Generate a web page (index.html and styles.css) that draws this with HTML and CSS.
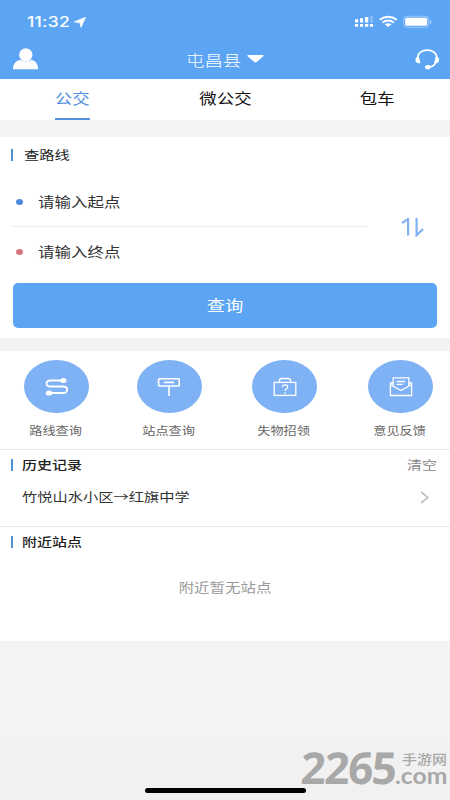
FILE: index.html
```html
<!DOCTYPE html>
<html lang="zh-CN">
<head>
<meta charset="utf-8">
<title>公交查询</title>
<link rel="stylesheet" href="styles.css">
</head>
<body>
<div class="app">
  <header class="header">
    <div class="status">
      <div class="status-left"><span class="wide time">11:32</span>
        <svg class="loc" width="12" height="11" viewBox="0 0 12 11"><path d="M11.5 .3 .4 4.9 5.8 5.6 7 10.3Z" fill="#fff" stroke="#fff" stroke-width=".8" stroke-linejoin="round"/></svg>
      </div>
      <svg class="signals" width="78" height="14" viewBox="0 0 78 14" fill="#fff">
        <path d="M0 4.3h3.2v3.2H0zM5 3.2h3.2v4.3H5zM10 2h3.3v5.5H10zM0 9h3.2v2.8H0zM5 9h3.2v2.8H5zM10 9h3.3v2.8H10zM15 9h3.2v2.8H15z"/>
        <path d="M15 1h3.2v6.5H15z" opacity=".25"/>
        <g fill="none" stroke="#fff" stroke-width="1.9"><path d="M24.7 4.7Q33-1.2 41.8 4.7M27.5 7.5q5.6-4 11.4 0"/></g>
        <path d="M29.8 9.3q3.4-2 6.8 0L33.2 12z"/>
        <rect x="48.7" y="1.3" width="25" height="11" rx="3" fill="none" stroke="#fff" stroke-width=".8" opacity=".5"/>
        <rect x="50.2" y="2.8" width="22" height="8" rx="1.5"/><path d="M75 5q3 2 0 4z" opacity=".6"/>
      </svg>
    </div>
    <div class="nav">
      <svg width="26" height="22" viewBox="0 0 26 22" fill="#fff"><ellipse cx="12.8" cy="6.8" rx="6.7" ry="6.6"/><path d="M0 21.2q0-7.6 7-9.4 5.8 3.6 11.6 0 6.4 1.8 6.6 9.4z"/></svg>
      <div class="city"><span class="wide">屯昌县</span><svg width="17" height="8" viewBox="0 0 17 8"><path d="M1 0h15q1.2.5 0 1.4L10 6.8q-1.5 1.2-3 0L1 1.4Q-.2.5 1 0z" fill="#fff"/></svg></div>
      <svg class="headset" width="25" height="21" viewBox="0 0 25 21"><path d="M3 10C2 4 7 1.2 12.3 1.2S22.5 4 21.5 10M21 13q-1.5 4.5-7 5" fill="none" stroke="#fff" stroke-width="1.8"/><path d="M3.6 7.3 5.6 14q-4.8 1-5.2-3 .2-3 3.2-3.7zM21 7.3 19 14q4.8 1 5.2-3-.2-3-3.2-3.7z" fill="#fff"/><ellipse cx="12.8" cy="18.2" rx="2.8" ry="2.1" fill="#fff"/></svg>
    </div>
  </header>
  <nav class="tabs">
    <div class="tab active"><span class="wide">公交</span></div>
    <div class="tab"><span class="wide">微公交</span></div>
    <div class="tab"><span class="wide">包车</span></div>
  </nav>
  <section class="search">
    <h2 class="title route-title"><i class="bar"></i><span class="wide">查路线</span></h2>
    <div class="form">
      <div class="fields">
        <div class="field"><i class="dot"></i><span class="wide">请输入起点</span></div>
        <div class="field"><i class="dot red"></i><span class="wide">请输入终点</span></div>
      </div>
      <svg class="swap" width="24" height="20" viewBox="0 0 24 20" fill="none" stroke="#80b1f1" stroke-width="2.2"><path d="M1 6.2 7 2M7.1 1v17.5"/><path d="M15.6 1v17.2L22 12"/></svg>
    </div>
    <div class="submit"><span class="wide">查询</span></div>
  </section>
  <section class="services">
    <div class="service">
      <div class="disc"><svg width="24" height="20" viewBox="0 0 24 20" fill="none" stroke="#fff" stroke-width="1.8"><path d="M18 3.5H5.5C.2 3.5.2 9.5 5.5 9.5H18c5.5 0 5.5 6.5 0 6.5H4.5"/><ellipse cx="18.4" cy="3.6" rx="3.1" ry="2.5" fill="#fff" stroke="none"/><ellipse cx="4" cy="16" rx="3.3" ry="2.6" fill="#fff" stroke="none"/></svg></div>
      <span class="wide">路线查询</span>
    </div>
    <div class="service">
      <div class="disc"><svg width="24" height="20" viewBox="0 0 24 20" fill="none" stroke="#fff" stroke-width="1.6"><rect x="1.6" y="1.8" width="20.6" height="7.2" rx=".7"/><path d="M7 5.4h10M12 9v10"/></svg></div>
      <span class="wide">站点查询</span>
    </div>
    <div class="service">
      <div class="disc"><svg width="24" height="20" viewBox="0 0 24 20" fill="none" stroke="#fff" stroke-width="1.3"><rect x="1.2" y="5.4" width="21.6" height="13"/><path d="M6.5 5.2V3.5q0-2 2.2-2h6.6q2.2 0 2.2 2v1.7M9.4 10c0-3 5.3-2.8 5.3 0 0 2-2.7 1.7-2.7 4.1M12 15.3v1.6"/></svg></div>
      <span class="wide">失物招领</span>
    </div>
    <div class="service">
      <div class="disc"><svg width="24" height="20" viewBox="0 0 24 20" fill="none" stroke="#fff" stroke-width="1.3"><path d="M4.2 6H1.4v12.5h21.2V6h-2.8M1.4 7.5 12 13.5l10.6-6M4.2 9V.9h15.6V9M7.5 4.5h8.5M7.5 7.3h6"/></svg></div>
      <span class="wide">意见反馈</span>
    </div>
  </section>
  <section class="history">
    <div class="row"><h2 class="title strong"><i class="bar"></i><span class="wide">历史记录</span></h2><span class="wide clear">清空</span></div>
    <div class="row record"><span class="wide">竹悦山水小区→红旗中学</span><svg width="9" height="13" viewBox="0 0 9 13"><path d="M1 1 7.8 6.5 1 12" fill="none" stroke="#b5b5b5" stroke-width="1.5"/></svg></div>
  </section>
  <section class="nearby">
    <h2 class="title strong"><i class="bar"></i><span class="wide">附近站点</span></h2>
    <div class="empty"><span class="wide">附近暂无站点</span></div>
  </section>
  <footer class="footer">
    <div class="home"></div>
    <div class="mark"><span class="mark-num">2265</span><span class="mark-cn">手游网</span><span class="mark-com">.com</span></div>
  </footer>
</div>
</body>
</html>
```

FILE: styles.css
```css
* { box-sizing: border-box; }
body { margin: 0; font-family: "Noto Sans CJK SC", sans-serif; background: #f3f3f3; }
.app { width: 450px; height: 800px; display: flex; flex-direction: column; overflow: hidden; }
svg { display: block; flex: none; }

/* Letterforms are 1.22 times wider than their natural width. */
.wide { display: inline-block; white-space: nowrap; transform: scaleX(1.22); transform-origin: left center; }
.tab .wide, .submit .wide, .service .wide, .empty .wide { transform-origin: center; }

.header { height: 79px; flex: none; background: #5ba5f4; color: #fff; }
.status { height: 44px; padding: 0 17px 0 27px; display: flex; justify-content: space-between; align-items: center; }
.status-left { display: flex; align-items: center; }
.time { width: 47px; font: 500 14.4px/20px Inter, sans-serif; letter-spacing: .2px; }
.nav { height: 30px; padding: 0 10px 0 13px; display: flex; justify-content: space-between; align-items: center; }
.city { display: flex; align-items: center; margin-right: 5px; font-size: 15.1px; line-height: 24px; font-weight: 300; }
.city .wide { width: 61px; }

.tabs { height: 41px; flex: none; background: #fff; display: flex; justify-content: space-between; padding: 0 55px; font-size: 14.3px; color: #111; }
.tab { height: 41px; line-height: 38px; width: 35px; display: flex; justify-content: center; }
.active { color: #4f8fdc; border-bottom: 2px solid #5590d8; }

.search { height: 201px; flex: none; margin-top: 17px; padding: 8px 13px 0 11px; background: #fff; }
.title { margin: 0; display: flex; align-items: center; font-size: 12.5px; line-height: 20px; font-weight: 400; color: #222; }
.strong { font-weight: 500; font-size: 12.3px; }
.bar { width: 2px; height: 12px; background: #5190d6; margin-right: 9px; }
.route-title .bar { margin-right: 11px; }
.form { height: 98px; margin-top: 13px; display: flex; align-items: center; }
.fields { width: 357px; }
.field { height: 49px; display: flex; align-items: center; font-size: 13.5px; line-height: 20px; color: #333; padding-left: 5px; }
.field .wide { padding-bottom: 2px; }
.field:first-child { border-bottom: 1px solid #eee; }
.dot { width: 7px; height: 6px; border-radius: 50%; background: #4b87dc; margin-right: 15px; }
.dot.red { background: #d9757f; }
.swap { margin-left: 33px; }
.submit { height: 45px; margin: 7px 0 0 2px; padding-bottom: 2px; border-radius: 5px; background: #5ba5f4; color: #fff; font-size: 15px; display: flex; align-items: center; justify-content: center; }

.services { height: 98px; flex: none; margin-top: 13px; padding: 9px 17px 0 24px; background: #fff; display: grid; grid-template-columns: 112.5px 115.5px 116px 65px; }
.service { width: 65px; display: flex; flex-direction: column; align-items: center; font-size: 10.8px; line-height: 18px; color: #666; }
.service .wide { margin-left: -1px; }
.disc { width: 65px; height: 53px; margin-bottom: 8px; border-radius: 50%; background: #7fb1f5; display: flex; align-items: center; justify-content: center; }

.history { height: 77px; flex: none; border-top: 1px solid #ececec; padding: 5px 11px 0; background: #fff; }
.row { display: flex; justify-content: space-between; align-items: center; }
.clear { width: 32px; font-size: 12.3px; line-height: 20px; color: #888; }
.record { height: 22px; margin-top: 11px; padding: 0 10px 0 11px; font-size: 12.5px; line-height: 20px; color: #333; }
.nearby { height: 115px; flex: none; border-top: 1px solid #ececec; padding: 5px 11px 0; background: #fff; }
.empty { margin-top: 25px; display: flex; justify-content: center; font-size: 12.7px; line-height: 20px; color: #999; }

.footer { height: 57px; flex: none; margin-top: auto; padding-top: 45px; background: #f1f1f1; position: relative; }
.home { width: 161px; height: 5px; margin: 0 auto; border-radius: 3px; background: #000; }
.mark { position: absolute; left: 300px; top: 0; width: 150px; height: 57px; color: #a8a8a8; }
.mark span { position: absolute; white-space: nowrap; transform-origin: left center; }
.mark-num { left: 1px; top: 1px; font: 700 44px/46px "Noto Sans", sans-serif; letter-spacing: -1.5px; transform: skewX(-3deg); }
.mark-cn { left: 102px; top: 9px; font-size: 13px; line-height: 13px; font-weight: 500; transform: scaleX(1.15); }
.mark-com { left: 95px; top: 25px; font: 700 22px/16px Lato, sans-serif; transform: scaleX(1.12); }
```
